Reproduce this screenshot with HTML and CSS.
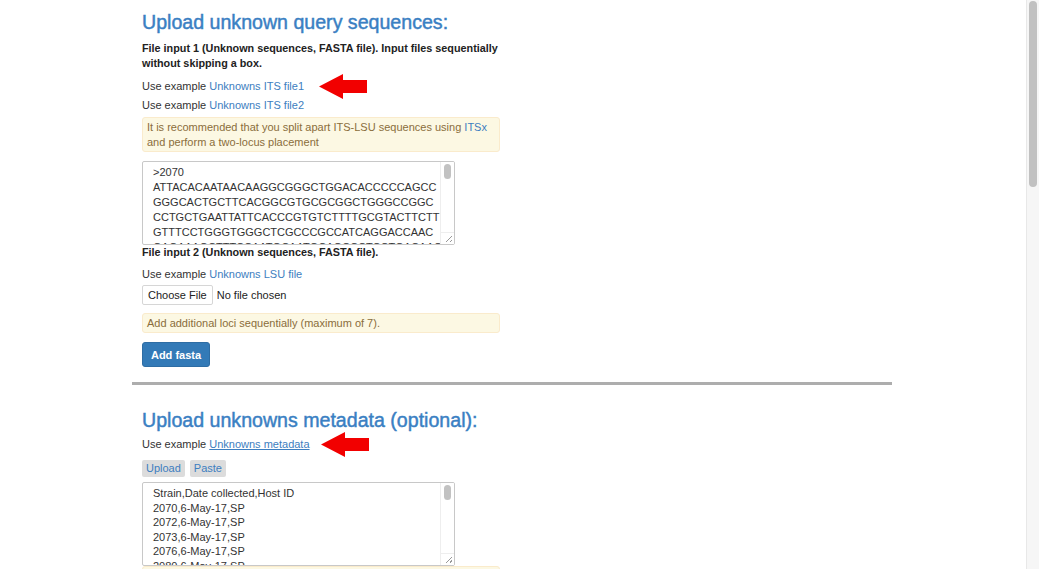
FILE: index.html
```html
<!DOCTYPE html>
<html>
<head>
<meta charset="utf-8">
<link rel="stylesheet" href="styles.css">
</head>
<body>
<div class="page">
  <main class="content">
    <section class="section">
      <h2 class="title">Upload unknown query sequences:</h2>
      <p class="label">File input 1 (Unknown sequences, FASTA file). Input files sequentially without skipping a box.</p>
      <div class="example-row row1">
        <p class="example">Use example <a class="link" href="#">Unknowns ITS file1</a></p>
        <span class="arrow"><svg width="48" height="25" viewBox="0 0 48 25"><polygon points="0,12.5 24,0 24,6 48,6 48,19 24,19 24,25" fill="#f20000"/></svg></span>
      </div>
      <p class="example ex2">Use example <a class="link" href="#">Unknowns ITS file2</a></p>
      <div class="alert alert-wide">It is recommended that you split apart ITS-LSU sequences using <a class="link" href="#">ITSx</a> and perform a two-locus placement</div>
      <div class="textbox seq">
        <div class="textbox-text">&gt;2070<br>ATTACACAATAACAAGGCGGGCTGGACACCCCCAGCC<br>GGGCACTGCTTCACGGCGTGCGCGGCTGGGCCGGC<br>CCTGCTGAATTATTCACCCGTGTCTTTTGCGTACTTCTT<br>GTTTCCTGGGTGGGCTCGCCCGCCATCAGGACCAAC<br>GAGAAAGCTTTCCAATGCAATGCAGCCCTCCTGACAAC</div>
        <div class="vscroll"><div class="thumb"></div></div>
        <span class="grip"></span>
      </div>
      <p class="label label2">File input 2 (Unknown sequences, FASTA file).</p>
      <p class="example ex3">Use example <a class="link" href="#">Unknowns LSU file</a></p>
      <div class="file-row"><span class="file-btn">Choose File</span><span class="file-none">No file chosen</span></div>
      <div class="alert alert-thin">Add additional loci sequentially (maximum of 7).</div>
      <button class="btn-primary">Add fasta</button>
    </section>
    <hr class="divider">
    <section class="section">
      <h2 class="title title2">Upload unknowns metadata (optional):</h2>
      <div class="example-row row2">
        <p class="example">Use example <a class="link underline" href="#">Unknowns metadata</a></p>
        <span class="arrow arrow2"><svg width="48" height="25" viewBox="0 0 48 25"><polygon points="0,12.5 24,0 24,6 48,6 48,19 24,19 24,25" fill="#f20000"/></svg></span>
      </div>
      <div class="tabs"><span class="tab">Upload</span><span class="tab">Paste</span></div>
      <div class="textbox meta">
        <div class="textbox-text meta-text">Strain,Date collected,Host ID<br>2070,6-May-17,SP<br>2072,6-May-17,SP<br>2073,6-May-17,SP<br>2076,6-May-17,SP<br>2080,6-May-17,SP</div>
        <div class="vscroll"><div class="thumb"></div></div>
        <span class="grip"></span>
      </div>
      <div class="alert alert-tail"></div>
    </section>
  </main>
  <div class="page-scroll"><div class="page-thumb"></div></div>
</div>
</body>
</html>
```

FILE: styles.css
```css
html, body {
  margin: 0;
  padding: 0;
  background: #ffffff;
  overflow: hidden;
}
body {
  font-family: "Liberation Sans", Arial, sans-serif;
  color: #333333;
  font-size: 11px;
}
.page {
  display: flex;
  width: 1039px;
  height: 569px;
  overflow: hidden;
}
.content {
  flex: 1;
  padding-left: 132px;
}
.section {
  padding-left: 10px;
  width: 358px;
}
.title {
  margin: 0;
  padding-top: 10px;
  font-size: 19.6px;
  font-weight: normal;
  color: #3a80c3;
  line-height: 24px;
  height: 24px;
  -webkit-text-stroke: 0.45px #3a80c3;
  white-space: nowrap;
}
.label {
  margin: 7px 0 0 0;
  font-weight: bold;
  line-height: 15px;
  font-size: 10.8px;
  color: #222;
}
.example-row {
  display: flex;
  align-items: center;
  height: 14px;
}
.row1 {
  margin-top: 8px;
}
.example {
  margin: 0;
  line-height: 14px;
  color: #333;
}
.link {
  color: #3d7ec0;
  text-decoration: none;
}
.underline {
  text-decoration: underline;
}
.arrow {
  display: block;
  margin-left: 15px;
  height: 25px;
  margin-top: -5px;
  margin-bottom: -6px;
}
.arrow2 {
  margin-left: 11px;
}
.arrow svg { display: block; }
.ex2 {
  margin-top: 5px;
}
.alert {
  background: #fcf8e3;
  border: 1px solid #faebcc;
  border-radius: 3px;
  color: #8a6d3b;
  box-sizing: border-box;
}
.alert-wide {
  margin-top: 5px;
  height: 35px;
  padding: 2px 4px;
  line-height: 15px;
}
.textbox {
  position: relative;
  margin-top: 9px;
  width: 313px;
  height: 84px;
  border: 1px solid #c8c8c8;
  box-sizing: border-box;
  border-radius: 2px;
  overflow: hidden;
  background: #fff;
}
.textbox-text {
  padding: 3px 0 0 10px;
  line-height: 15px;
  font-size: 11px;
  color: #333;
  white-space: nowrap;
  width: 290px;
  overflow: hidden;
}
.vscroll {
  position: absolute;
  top: 0;
  right: 0;
  width: 14px;
  height: 100%;
  background: #fff;
  border-left: 1px solid #eee;
  box-sizing: border-box;
}
.thumb {
  margin: 2px auto 0;
  width: 7px;
  height: 15px;
  border-radius: 4px;
  background: #c2c2c2;
}
.grip {
  position: absolute;
  right: 0;
  bottom: 0;
  width: 14px;
  height: 12px;
  background: #fff;
  border-top: 1px solid #eee;
  border-left: 1px solid #eee;
  box-sizing: border-box;
}
.grip::after {
  content: "";
  position: absolute;
  right: 2px;
  bottom: 2px;
  width: 6px;
  height: 6px;
  background: linear-gradient(135deg, transparent 45%, #999 45%, #999 55%, transparent 55%, transparent 75%, #999 75%, #999 85%, transparent 85%);
}
.label2 {
  margin-top: 0;
}
.ex3 {
  margin-top: 7px;
}
.file-row {
  display: flex;
  align-items: center;
  margin-top: 4px;
}
.file-btn {
  display: inline-block;
  height: 20px;
  line-height: 18px;
  padding: 0 5px;
  border: 1px solid #d6d6d6;
  border-radius: 2px;
  box-sizing: border-box;
  font-size: 11px;
  color: #222;
  background: #fff;
}
.file-none {
  margin-left: 4px;
  color: #222;
}
.alert-thin {
  margin-top: 8px;
  height: 20px;
  line-height: 18px;
  padding: 0 4px;
}
.btn-primary {
  display: block;
  margin-top: 9px;
  width: 68px;
  height: 25px;
  border: 1px solid #2e6da4;
  border-radius: 3px;
  background: #337ab7;
  color: #fff;
  font-family: "Liberation Sans", Arial, sans-serif;
  font-size: 11px;
  font-weight: bold;
  padding: 0;
}
.divider {
  margin: 15px 0 0 0;
  width: 760px;
  height: 3px;
  border: 0;
  background: #adadad;
}
.title2 {
  padding-top: 23px;
}
.row2 {
  margin-top: 5px;
}
.tabs {
  display: flex;
  gap: 5px;
  margin-top: 9px;
}
.tab {
  display: inline-block;
  height: 17px;
  line-height: 17px;
  padding: 0 4px;
  background: #dcdcdc;
  color: #3d7ec0;
  border-radius: 2px;
  font-size: 11px;
}
.meta {
  margin-top: 5px;
}
.meta-text {
  line-height: 14.6px;
  padding-top: 3px;
}
.alert-tail {
  margin-top: 0;
  height: 20px;
}
.page-scroll {
  width: 13px;
  height: 569px;
  background: #f6f6f6;
  border-left: 1px solid #e8e8e8;
  box-sizing: border-box;
  flex: none;
}
.page-thumb {
  margin: 1px auto 0;
  width: 8px;
  height: 186px;
  border-radius: 4px;
  background: #c1c1c1;
}
```
